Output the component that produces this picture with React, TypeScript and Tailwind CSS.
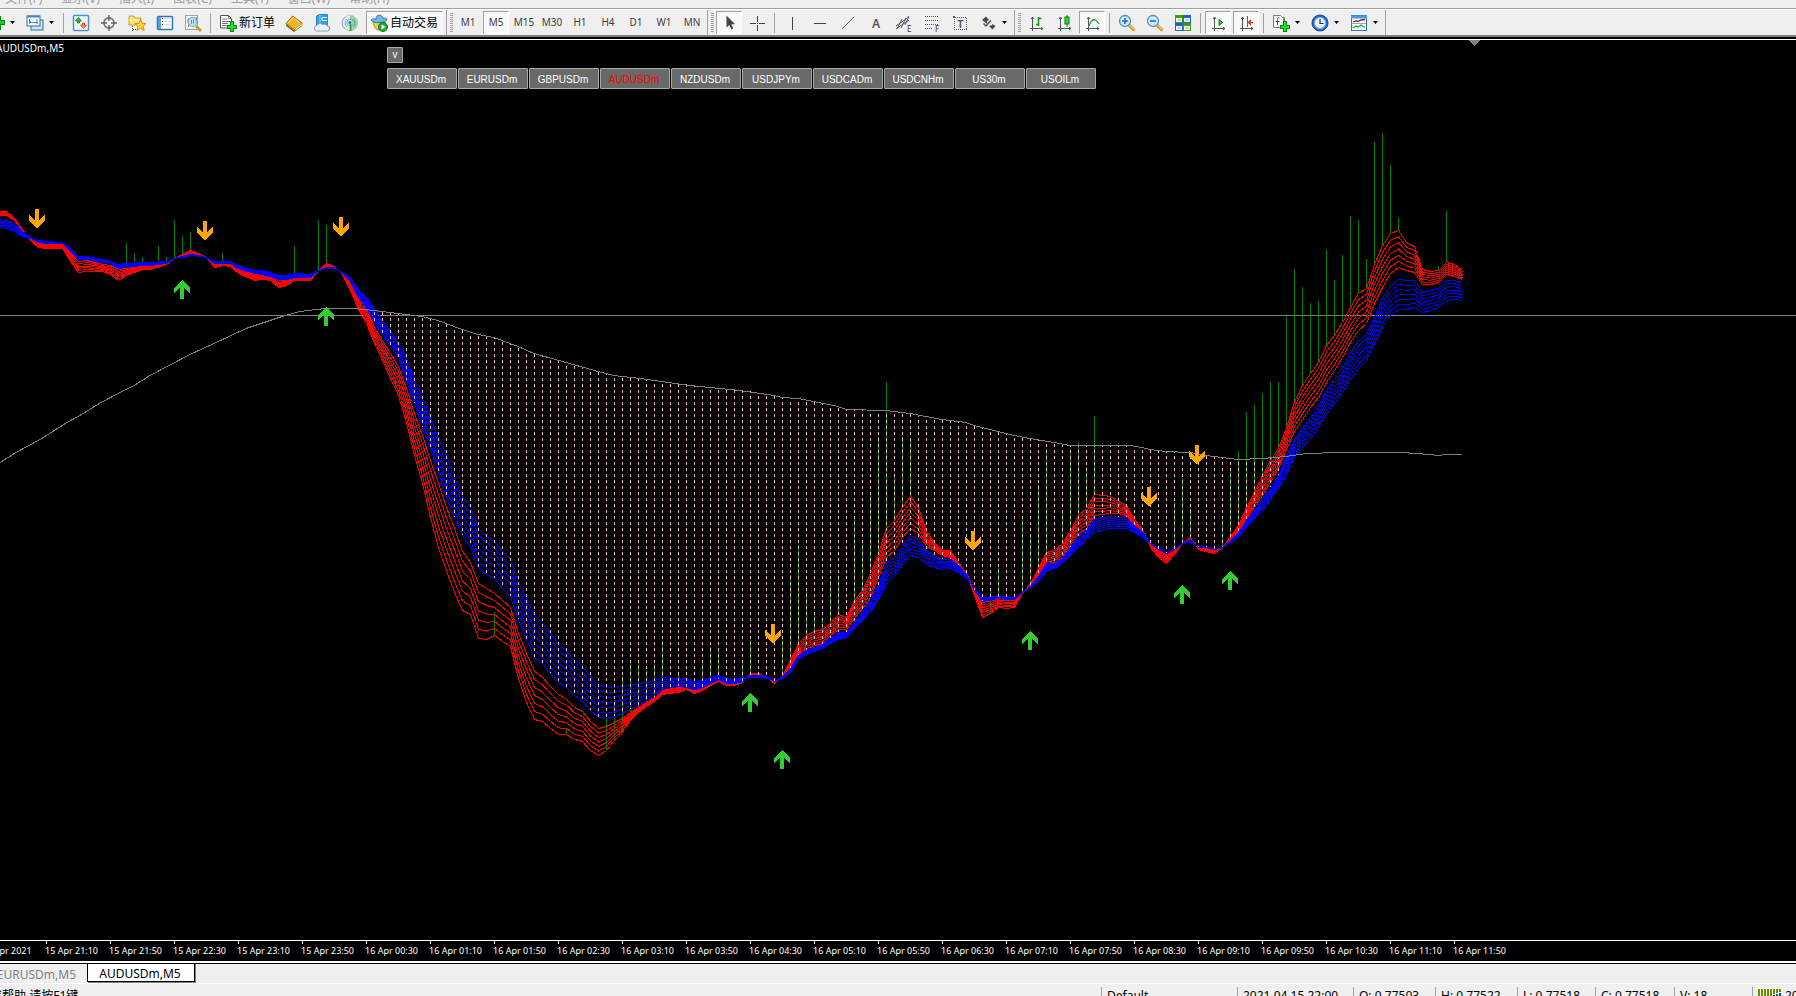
import { useState } from "react";
import type { ReactNode } from "react";

// x, fast line, end of fast group, start of slow group, slow line
const BANDS: number[][] = [
    [-2, 211, 215, 219, 227], [6, 211, 215, 220, 228], [14, 218, 220, 223, 231], [22, 229, 230, 231, 236],
    [30, 240, 238, 237, 238], [38, 247, 243, 242, 240], [46, 248, 244, 243, 241], [62, 248, 244, 243, 242],
    [70, 261, 252, 251, 248], [78, 272, 259, 259, 256], [86, 271, 260, 259, 256], [102, 271, 264, 262, 259],
    [110, 274, 265, 263, 261], [118, 280, 269, 268, 264], [126, 275, 268, 267, 263], [142, 269, 265, 265, 262],
    [150, 269, 265, 265, 262], [166, 264, 263, 263, 261], [174, 258, 258, 258, 258], [182, 254, 256, 256, 257],
    [190, 250, 254, 254, 255], [198, 253, 255, 255, 256], [206, 257, 257, 257, 257], [214, 267, 263, 263, 261],
    [222, 265, 263, 263, 261], [230, 266, 263, 263, 261], [238, 273, 268, 268, 265], [254, 280, 274, 273, 270],
    [262, 279, 274, 274, 270], [270, 280, 276, 276, 272], [278, 287, 279, 279, 275], [286, 285, 279, 279, 275],
    [294, 280, 277, 277, 273], [310, 280, 277, 277, 274], [318, 270, 270, 270, 270], [326, 263, 267, 267, 268],
    [334, 266, 267, 267, 268], [342, 274, 273, 273, 272], [350, 290, 281, 281, 277], [358, 309, 298, 297, 289],
    [366, 323, 308, 307, 297], [374, 343, 327, 322, 308], [382, 360, 340, 335, 320], [390, 378, 353, 346, 331],
    [398, 395, 366, 358, 342], [406, 422, 388, 380, 357], [414, 455, 413, 403, 380], [422, 483, 435, 427, 397],
    [430, 517, 460, 448, 417], [438, 547, 483, 473, 438], [446, 570, 507, 497, 455], [454, 592, 528, 517, 477],
    [462, 610, 551, 535, 497], [470, 614, 562, 546, 507], [478, 638, 583, 568, 528], [486, 639, 588, 574, 536],
    [494, 635, 593, 578, 541], [502, 641, 600, 588, 551], [510, 646, 607, 596, 559], [518, 678, 633, 619, 583],
    [526, 702, 653, 639, 598], [534, 719, 671, 657, 615], [542, 721, 677, 663, 623], [550, 728, 686, 673, 633],
    [558, 734, 694, 682, 644], [566, 734, 699, 687, 651], [574, 739, 707, 695, 660], [582, 741, 711, 701, 666],
    [590, 750, 721, 710, 676], [598, 755, 728, 717, 684], [606, 750, 726, 718, 687], [614, 740, 722, 716, 687],
    [622, 732, 718, 713, 686], [630, 720, 712, 709, 685], [638, 712, 707, 705, 683], [646, 706, 702, 700, 682],
    [654, 701, 697, 697, 680], [662, 694, 689, 689, 677], [678, 692, 687, 686, 678], [686, 689, 687, 687, 678],
    [694, 693, 690, 689, 681], [702, 690, 687, 687, 680], [710, 685, 683, 683, 677], [718, 681, 680, 679, 675],
    [726, 685, 684, 683, 678], [734, 685, 683, 683, 679], [742, 682, 681, 681, 677], [750, 673, 674, 675, 677],
    [758, 673, 674, 675, 677], [766, 677, 677, 676, 678], [774, 683, 681, 681, 680], [782, 675, 676, 676, 678],
    [790, 660, 668, 668, 672], [798, 643, 654, 655, 659], [806, 635, 648, 650, 654], [814, 631, 645, 647, 651],
    [822, 629, 643, 644, 648], [830, 623, 635, 638, 643], [838, 614, 629, 632, 639], [846, 617, 629, 632, 637],
    [854, 600, 618, 622, 628], [862, 590, 608, 612, 620], [870, 573, 597, 599, 612], [878, 553, 577, 585, 599],
    [886, 528, 557, 563, 583], [894, 520, 550, 557, 575], [902, 507, 537, 545, 564], [910, 496, 528, 535, 555],
    [918, 507, 533, 539, 557], [926, 531, 546, 550, 564], [934, 542, 550, 555, 567], [942, 550, 555, 559, 569],
    [950, 550, 557, 559, 568], [958, 562, 564, 565, 572], [966, 573, 573, 574, 578], [974, 595, 588, 590, 588],
    [982, 617, 602, 601, 597], [990, 613, 601, 600, 597], [998, 607, 598, 597, 595], [1006, 608, 599, 599, 597],
    [1014, 607, 599, 599, 597], [1022, 593, 592, 592, 592], [1030, 583, 585, 586, 587], [1038, 568, 575, 576, 581],
    [1046, 552, 563, 563, 571], [1054, 550, 562, 563, 568], [1062, 543, 557, 558, 563], [1070, 530, 545, 547, 555],
    [1078, 515, 533, 536, 547], [1086, 508, 528, 530, 540], [1094, 494, 515, 519, 532], [1102, 495, 514, 517, 529],
    [1110, 496, 513, 516, 528], [1118, 501, 513, 517, 528], [1126, 505, 515, 517, 528], [1134, 519, 524, 525, 532],
    [1142, 529, 531, 532, 537], [1150, 547, 543, 543, 543], [1158, 557, 550, 549, 547], [1166, 563, 554, 553, 552],
    [1174, 554, 549, 549, 548], [1182, 543, 543, 543, 543], [1190, 537, 538, 539, 542], [1198, 549, 547, 547, 546],
    [1206, 551, 548, 547, 546], [1214, 553, 550, 549, 549], [1222, 547, 547, 547, 547], [1230, 536, 539, 540, 542],
    [1238, 525, 532, 532, 537], [1246, 507, 518, 520, 527], [1254, 492, 507, 510, 518], [1262, 475, 495, 498, 510],
    [1270, 460, 482, 487, 500], [1278, 448, 468, 475, 488], [1286, 427, 449, 456, 475], [1294, 402, 431, 439, 456],
    [1302, 385, 419, 428, 447], [1310, 373, 407, 417, 438], [1318, 362, 397, 406, 427], [1326, 345, 382, 390, 414],
    [1334, 335, 370, 379, 403], [1342, 322, 357, 367, 392], [1350, 307, 342, 352, 379], [1358, 293, 330, 341, 368],
    [1366, 288, 323, 333, 360], [1374, 264, 303, 317, 343], [1382, 245, 287, 298, 327], [1390, 233, 273, 286, 315],
    [1398, 230, 267, 279, 309], [1406, 242, 270, 280, 309], [1414, 246, 272, 280, 307], [1422, 269, 284, 292, 312],
    [1430, 271, 284, 290, 310], [1438, 270, 282, 288, 307], [1446, 262, 274, 280, 300], [1454, 264, 276, 280, 299],
    [1462, 270, 279, 283, 300],
];

const AVERAGE: number[][] = [
    [0, 462], [16, 452], [40, 439], [67, 422], [78, 416], [101, 402], [120, 392], [134, 385], [150, 375], [190, 354],
    [214, 343], [246, 328], [270, 320], [285, 315], [300, 311], [325, 308], [354, 308], [374, 310], [398, 313],
    [406, 314], [422, 316], [438, 320], [462, 329], [478, 334], [494, 337], [518, 346], [534, 353], [566, 362],
    [598, 371], [614, 375], [640, 378], [690, 385], [740, 390], [774, 395], [782, 397], [798, 398], [814, 401],
    [838, 406], [846, 409], [886, 410], [910, 413], [942, 419], [966, 422], [974, 425], [1014, 435], [1030, 438],
    [1054, 442], [1070, 445], [1130, 445], [1142, 447], [1150, 449], [1166, 451], [1190, 452], [1206, 455],
    [1222, 457], [1238, 459], [1262, 458], [1286, 456], [1306, 453], [1338, 452], [1402, 452], [1430, 454],
    [1438, 455], [1446, 454], [1462, 454],
];

// x, top of the candle shadow
const SHADOWS: number[][] = [
    [126, 243], [134, 253], [142, 257], [158, 246], [166, 257], [174, 220], [182, 236], [190, 232], [222, 253],
    [294, 246], [318, 220], [326, 225], [494, 612], [566, 729], [606, 718], [614, 700], [622, 676], [630, 661],
    [638, 663], [646, 670], [654, 664], [662, 641], [678, 675], [702, 663], [710, 647], [718, 648], [742, 663],
    [750, 640], [782, 637], [790, 575], [798, 545], [806, 588], [814, 614], [822, 618], [830, 580], [838, 578],
    [854, 518], [862, 542], [870, 492], [878, 437], [886, 382], [894, 477], [902, 436], [910, 438], [990, 590],
    [998, 568], [1022, 518], [1030, 537], [1038, 485], [1046, 450], [1062, 510], [1070, 453], [1078, 442],
    [1086, 467], [1094, 416], [1174, 502], [1182, 478], [1190, 508], [1222, 520], [1230, 468], [1238, 451],
    [1246, 412], [1254, 405], [1262, 393], [1270, 382], [1278, 382], [1286, 317], [1294, 269], [1302, 287],
    [1310, 303], [1318, 301], [1326, 250], [1334, 280], [1342, 255], [1350, 216], [1358, 220], [1366, 259],
    [1374, 142], [1382, 133], [1390, 165], [1398, 218], [1438, 266], [1446, 211],
];

const SELL_ARROWS = [[37, 228], [205, 240], [341, 236], [773, 643], [973, 550], [1149, 506], [1197, 464]];
const BUY_ARROWS = [[182, 280], [326, 307], [750, 693], [782, 750], [1030, 631], [1182, 585], [1230, 571]];

const TIMES = [
    "15 Apr 2021", "15 Apr 21:10", "15 Apr 21:50", "15 Apr 22:30", "15 Apr 23:10", "15 Apr 23:50", "16 Apr 00:30",
    "16 Apr 01:10", "16 Apr 01:50", "16 Apr 02:30", "16 Apr 03:10", "16 Apr 03:50", "16 Apr 04:30", "16 Apr 05:10",
    "16 Apr 05:50", "16 Apr 06:30", "16 Apr 07:10", "16 Apr 07:50", "16 Apr 08:30", "16 Apr 09:10", "16 Apr 09:50",
    "16 Apr 10:30", "16 Apr 11:10", "16 Apr 11:50",
];

const SYMBOLS = ["XAUUSDm", "EURUSDm", "GBPUSDm", "AUDUSDm", "NZDUSDm", "USDJPYm", "USDCADm", "USDCNHm", "US30m", "USOILm"];
const MENUS = ["文件(F)", "显示(V)", "插入(I)", "图表(C)", "工具(T)", "窗口(W)", "帮助(H)"];
const PERIODS = ["M1", "M5", "M15", "M30", "H1", "H4", "D1", "W1", "MN"];

const valueAt = (rows: number[][], x: number, col: number) => {
    const i = rows.findIndex((r) => r[0] >= x);
    if (i <= 0) return rows[0][col];
    const a = rows[i - 1];
    const b = rows[i];
    return a[col] + ((b[col] - a[col]) * (x - a[0])) / (b[0] - a[0]);
};

const bandLine = (from: number, to: number, step: number) =>
    BANDS.map((r) => `${r[0] + 0.5},${(r[from] + ((r[to] - r[from]) * step) / 6 + 0.5).toFixed(1)}`).join(" ");

const STEPS = [0, 1, 2, 3, 4, 5, 6];
const DOTTED = Array.from({ length: 115 }, (_, i) => 374 + i * 8);

const Chart = () => (
    <svg className="block h-full w-full" shapeRendering="crispEdges" fill="none" role="img" aria-label="AUDUSDm M5 chart">
        <g transform="translate(0 -40)">
            <path d="M1469 40h11l-5.500 6z" fill="#808080" />
            <path d="M0 315.500H4000" stroke="#808080" />
            {SHADOWS.map(([x, y]) => (
                <path key={x} d={`M${x + 0.5} ${y}V${Math.round(valueAt(BANDS, x, 1))}`} stroke="#008000" />
            ))}
            {STEPS.map((s) => <polyline key={s} points={bandLine(1, 2, s)} stroke="#ff0000" />)}
            {STEPS.map((s) => <polyline key={s} points={bandLine(3, 4, s)} stroke="#0000ff" />)}
            {DOTTED.map((x) => {
                const top = Math.round(valueAt(AVERAGE, x, 1));
                return (
                    <path
                        key={x}
                        d={`M${x + 0.5} ${top}V${Math.round(valueAt(BANDS, x, 3))}`}
                        stroke="#ffc0cb"
                        strokeDasharray="3 3"
                        strokeDashoffset={top % 6}
                    />
                );
            })}
            <polyline points={AVERAGE.map(([x, y]) => `${x},${y + 0.5}`).join(" ")} stroke="#808080" />
            {SELL_ARROWS.map(([x, y]) => (
                <path key={x} d={`M${x} ${y}l8-7v-6l-6 5v-11h-4v11l-6-5v6z`} fill="#ffa500" />
            ))}
            {BUY_ARROWS.map(([x, y]) => (
                <path key={x} d={`M${x} ${y}l8 8v5l-6-5v11h-4v-11l-6 5v-5z`} fill="#32cd32" />
            ))}
        </g>
    </svg>
);

const Icon = ({ children }: { children: ReactNode }) => (
    <svg className="size-[18px] shrink-0" viewBox="0 0 18 18" fill="none" aria-hidden="true">{children}</svg>
);

const GreenPlus = () => (
    <>
        <path d="M11 7h4v4h3v4h-3v3h-4v-3H8v-4h3z" fill="#0a8a0a" />
        <path d="M12 8h2v4h3v2h-3v3h-2v-3H9v-2h3z" fill="#1fe02f" />
    </>
);

const Axes = () => <path d="M5.500 3v14M3 14.500h13M4 5l1.500-2L7 5M14 13l2 1.500-2 1.500" stroke="#555" />;

const icons = {
    plus: <Icon><path d="M9 2h5v4h4v5h-4v5H9v-5H5V6h4z" fill="#0a8a0a" /><path d="M10 3h3v4h4v3h-4v5h-3v-5H6V7h4z" fill="#10d020" /></Icon>,
    windows: (
        <Icon>
            <rect x="5" y="6" width="12" height="10" fill="#cfe4f7" stroke="#2f6ea5" />
            <rect x="1" y="2" width="13" height="10" fill="#f4f9ff" stroke="#2f6ea5" />
            <path d="M1 2.500h13" stroke="#3c8ad0" strokeWidth="2" />
            <path d="M3.500 5v5M3 8.500h9M5 7L3.500 8.500M11 5v5" stroke="#5d88ad" />
        </Icon>
    ),
    market: (
        <Icon>
            <rect x="1.500" y="1.500" width="15" height="15" rx="1" fill="#f7fbff" stroke="#4a90d2" strokeWidth="1.500" />
            <path d="M9 4h6M11 7h4M3 11h4M3 14h6" stroke="#d5dbe6" strokeDasharray="1 1" />
            <path d="M6.500 3.500l3 3.500h-2v2h-2V7h-2z" fill="#35c235" stroke="#0b7a0b" strokeWidth=".8" />
            <path d="M11.500 14.500l3-3.500h-2V9h-2v2h-2z" fill="#ff8a4a" stroke="#c8380c" strokeWidth=".8" />
        </Icon>
    ),
    target: <Icon><circle cx="9" cy="9" r="5" stroke="#777" strokeWidth="1.800" /><path d="M9 1v6M9 11v6M1 9h6M11 9h6" stroke="#666" strokeWidth="1.500" /></Icon>,
    favorites: (
        <Icon>
            <path d="M1 2h5l1 2h6v7H1z" fill="#f6dd78" stroke="#c8a032" />
            <path d="M1 6h12" stroke="#fff2b8" />
            <path d="M4.500 12v5M5 15.500h3" stroke="#444" strokeDasharray="1 1" />
            <path d="M12.500 5.500l1.700 3.800 4 .3-3 2.700 1 4.200-3.700-2.200L8.800 16.500l1-4.200-3-2.700 4-.3z" fill="#ffd23c" stroke="#b98512" strokeWidth=".8" />
        </Icon>
    ),
    navigator: (
        <Icon>
            <rect x="1.500" y="2.500" width="15" height="13" rx="1" fill="#f7faff" stroke="#2f78bd" strokeWidth="1.500" />
            <path d="M3.500 3v12" stroke="#5b9fdb" strokeWidth="3" />
            <path d="M6.500 4v8" stroke="#222" strokeDasharray="1 2" />
            <path d="M6.500 4v1" stroke="#e00" /><path d="M8 4.500h7M8 7.500h7M8 10.500h7" stroke="#d9dfea" />
        </Icon>
    ),
    tester: (
        <Icon>
            <rect x="1.500" y="1.500" width="12" height="14" fill="#f6f6f0" stroke="#a3a3a3" />
            <path d="M4.500 4v9M3 6h2M12.500 3v5M11 5h2" stroke="#8a8a8a" />
            <circle cx="8.500" cy="8" r="4.500" fill="#b9dcf5" fillOpacity=".85" stroke="#6aa3cf" />
            <path d="M7.500 6v4M9.500 5.500v4" stroke="#6b8fb0" />
            <path d="M12 12l5 5" stroke="#c8992a" strokeWidth="2.800" />
        </Icon>
    ),
    order: (
        <Icon>
            <path d="M1.500 1.500h8l3 3v9.500h-11z" fill="#fff" stroke="#555" />
            <path d="M9.500 1.500v3h3M3 5h5M3 7.500h8M3 9.500h6M3 11.500h5" stroke="#777" /><GreenPlus />
        </Icon>
    ),
    book: (
        <Icon>
            <path d="M1 10l8 6 8-6v2l-8 6-8-6z" fill="#8c6414" />
            <path d="M1 9.500L7.500 2 17 9l-7 7z" fill="#edb62c" stroke="#9c6b12" />
            <path d="M3 9l5-5.500 6 4.500" stroke="#fbe08a" />
            <path d="M10 15l7-6 .5 2-7.500 6z" fill="#fff3c6" stroke="#9c6b12" strokeWidth=".5" />
        </Icon>
    ),
    cloud: (
        <Icon>
            <path d="M3.500 2l3-1.500h8V11h-11z" fill="#2fa0ee" stroke="#1673bd" strokeWidth=".8" />
            <path d="M7 1v9" stroke="#8fd0fa" />
            <path d="M9 3.500h5M9 6.500h5M9 3.500v3" stroke="#e6f5ff" />
            <path d="M3.500 17a2.800 2.800 0 01.5-5.500 3.300 3.300 0 015.500-1 3 3 0 014.500 1.500 2.500 2.500 0 01.5 5z" fill="#edf3fb" stroke="#7f9cc4" />
        </Icon>
    ),
    signal: (
        <Icon>
            <circle cx="9" cy="9" r="7.800" fill="#e1efe4" stroke="#b4ccba" strokeWidth=".8" />
            <path d="M9 1.200a7.800 7.800 0 010 15.600z" fill="#9ccfa6" />
            <path d="M6 13a5 5 0 010-8M4 15a7.500 7.500 0 010-12" stroke="#86b2d2" />
            <path d="M12 13a5 5 0 000-8" stroke="#5aae6c" />
            <circle cx="9" cy="8.500" r="3.200" fill="#cfe4f2" stroke="#79aacb" />
            <circle cx="9" cy="8.500" r="1.600" fill="#2e75b5" /><path d="M9.500 10v7" stroke="#3a9a4e" strokeWidth="1.800" />
        </Icon>
    ),
    auto: (
        <Icon>
            <path d="M3 8c1 5 3 8 6 8s6-3 6-8z" fill="#f2cb4e" stroke="#b38a1e" />
            <path d="M1 6c2-2 4-1 5-1 0-5 6-5 7-1 2 0 4 0 4 2-2 3-14 4-16 0z" fill="#6cb7de" stroke="#347fae" />
            <circle cx="13" cy="13" r="4.500" fill="#20ae2c" stroke="#0c7818" /><path d="M11.500 10.500v5l4-2.500z" fill="#fff" />
        </Icon>
    ),
    cursor: <Icon><path d="M6.500 1.500v12l2.800-2.600 2 4.600 2-1-2-4.300h3.700z" fill="#444" /></Icon>,
    crosshair: <Icon><path d="M9.500 2v6M9.500 11v6M2 9.500h6M11 9.500h6" stroke="#444" shapeRendering="crispEdges" /><path d="M9 9h1v1H9z" fill="#444" /></Icon>,
    vline: <Icon><path d="M9.500 3v13" stroke="#444" shapeRendering="crispEdges" /></Icon>,
    hline: <Icon><path d="M3 9.500h12" stroke="#444" shapeRendering="crispEdges" /></Icon>,
    trend: <Icon><path d="M3 15L15 3" stroke="#555" /></Icon>,
    label: <Icon><text x="9" y="14" textAnchor="middle" fontSize="12" fontWeight="600" fontFamily="Noto Sans" fill="#555">A</text></Icon>,
    channel: (
        <Icon>
            <path d="M1 12L14 3M1 15l13-9M2 15L7 5M6 14l5-10M10 11l4-9" stroke="#555" />
            <text x="12" y="18" fontSize="8" fontFamily="Noto Sans" fill="#333">E</text>
        </Icon>
    ),
    fibo: (
        <Icon>
            <path d="M2 2.500h14M2 6.500h14M2 10.500h14M2 14.500h8" stroke="#555" strokeDasharray="1 1" shapeRendering="crispEdges" />
            <text x="12" y="18" fontSize="8" fontFamily="Noto Sans" fill="#333">F</text>
        </Icon>
    ),
    textbox: (
        <Icon>
            <rect x="3.500" y="3.500" width="12" height="12" stroke="#555" strokeDasharray="1 1" shapeRendering="crispEdges" />
            <path d="M2 2h2v2H2z" fill="#555" />
            <text x="9.500" y="14" textAnchor="middle" fontSize="11" fontWeight="600" fontFamily="Noto Sans" fill="#555">T</text>
        </Icon>
    ),
    shapes: (
        <Icon>
            <path d="M3 6l4-3.500L10 6 7.500 7.500 9 9 7.500 9.500zM10 12l3.500-1-1-1.500 4 2.500-3 3.500z" fill="#4a4a4a" />
            <path d="M4.500 9.500L7 12l5-5.500" stroke="#555" strokeWidth="1.500" />
        </Icon>
    ),
    bars: <Icon><Axes /><path d="M11.500 3v9M11.500 4.500h3M9 10.500h2.500" stroke="#149014" strokeWidth="1.500" /></Icon>,
    candles: <Icon><Axes /><path d="M12 1v12" stroke="#0a7a0a" /><rect x="10" y="3" width="4" height="7" fill="#2ad83a" stroke="#0a7a0a" /></Icon>,
    line: <Icon><Axes /><path d="M6 12c3-8 6-8 10-2" stroke="#2f9a3a" strokeWidth="1.300" /></Icon>,
    zoomIn: (
        <Icon>
            <path d="M11 11l5.500 5.500" stroke="#b28a1a" strokeWidth="3" /><path d="M11.500 11l5 5" stroke="#f5d34a" strokeWidth="1.200" />
            <circle cx="7" cy="7" r="5.500" fill="#cfeafd" stroke="#4a90c8" strokeWidth="1.300" /><path d="M4 7h6M7 4v6" stroke="#2a6fae" strokeWidth="1.600" />
        </Icon>
    ),
    zoomOut: (
        <Icon>
            <path d="M11 11l5.500 5.500" stroke="#b28a1a" strokeWidth="3" /><path d="M11.500 11l5 5" stroke="#f5d34a" strokeWidth="1.200" />
            <circle cx="7" cy="7" r="5.500" fill="#cfeafd" stroke="#4a90c8" strokeWidth="1.300" /><path d="M4 7h6" stroke="#2a6fae" strokeWidth="1.600" />
        </Icon>
    ),
    tiles: (
        <Icon>
            <path d="M1 1h8v8H1zM9 9h8v8H9z" fill="#3f9a14" /><path d="M9 1h8v8H9zM1 9h8v8H1z" fill="#1f5fd0" />
            <path d="M2 4h6v4H2zM10 4h6v4h-6zM2 12h6v4H2zM10 12h6v4h-6z" fill="#f4f8ee" />
            <path d="M3 6h4M11 6h4M3 14h4M11 14h4" stroke="#9fb8a0" />
        </Icon>
    ),
    scroll: <Icon><Axes /><path d="M10 5.500v6l3.500-3z" fill="#35c445" stroke="#0d800d" /></Icon>,
    shift: <Icon><Axes /><path d="M10.500 2v11" stroke="#2f6ea5" /><path d="M16 8.500h-4M14 6l-2.500 2.500L14 11" stroke="#c23b0e" strokeWidth="1.300" /></Icon>,
    indicator: (
        <Icon>
            <path d="M4.500 3.500h8v10h-8z" fill="#fff" stroke="#777" /><path d="M1.500 1.500h7l3 3v9h-10z" fill="#fff" stroke="#777" />
            <path d="M7.500 4c-2-1-2 1-2 3v4M3.500 7.500h4" stroke="#444" /><GreenPlus />
        </Icon>
    ),
    clock: (
        <Icon>
            <circle cx="9" cy="9" r="8" fill="#1f6fc8" stroke="#134b94" /><circle cx="9" cy="9" r="5.500" fill="#eef6ff" stroke="#7db5ea" />
            <path d="M9 5v4.500h3.500" stroke="#333" strokeWidth="1.200" />
        </Icon>
    ),
    template: (
        <Icon>
            <rect x="1.500" y="1.500" width="15" height="15" fill="#fafcff" stroke="#2f78bd" /><path d="M1 3h16" stroke="#4a9be0" strokeWidth="3" />
            <path d="M3 8l3-1 2 .5 3-1.500 4-.5" stroke="#8a2c0c" strokeWidth="1.300" /><path d="M2 9.500h14" stroke="#7db0dc" />
            <path d="M3 14l3-2 2 1 3-2 2 1.500 2 1" stroke="#2d9a35" strokeWidth="1.300" />
        </Icon>
    ),
};

const PRESSED = "border-t-[#a0a0a0] border-l-[#a0a0a0] border-r-white border-b-white bg-[#f8f8f8]";

const ToolButton = ({ name, pressed, children }: { name: string; pressed?: boolean; children: ReactNode }) => (
    <button
        type="button"
        aria-label={name}
        className={`mx-px flex h-[23px] w-[26px] shrink-0 items-center justify-center border text-[10px] text-[#404040] ${pressed ? PRESSED : "border-transparent"}`}
    >
        {children}
    </button>
);

const Caret = ({ name }: { name: string }) => (
    <button type="button" aria-label={name} className="flex h-[23px] w-[11px] shrink-0 items-center">
        <svg className="h-[3px] w-[5px]" viewBox="0 0 5 3" aria-hidden="true"><path d="M0 0h5L2.500 3z" fill="#000" /></svg>
    </button>
);

const Sep = () => <div className="mx-[3px] h-5 w-px shrink-0 bg-[#a0a0a0]" />;

const Grip = () => (
    <div className="mr-px ml-[3px] h-5 w-[3px] shrink-0 bg-[repeating-linear-gradient(#a0a0a0_0_1px,#efefef_1px_2px)]" />
);

const Group = ({ children }: { children: ReactNode }) => (
    <div className="flex h-full shrink-0 items-center border-r border-[#a0a0a0] pr-px">{children}</div>
);

const App = () => {
    const [symbol, setSymbol] = useState("AUDUSDm");

    return (
        <div className="flex h-screen flex-col overflow-hidden bg-[#efefef] font-['Noto_Sans','Noto_Sans_CJK_SC',sans-serif] text-xs text-black">
            <nav className="flex h-[9px] shrink-0 items-end gap-[19px] overflow-hidden border-b border-[#a0a0a0] pb-px pl-[5px] text-[#a0a0a0]">
                {MENUS.map((m) => (
                    <button key={m} type="button" className="shrink-0 leading-4">{m}</button>
                ))}
            </nav>

            <div className="flex h-[28px] shrink-0 items-center overflow-hidden border-t border-b-2 border-t-white border-b-[#808080]">
                <Group>
                    <div className="-ml-[18px] flex items-center">
                        <ToolButton name="New chart">{icons.plus}</ToolButton>
                        <Caret name="New chart list" />
                    </div>
                    <ToolButton name="Profiles">{icons.windows}</ToolButton>
                    <Caret name="Profile list" />
                    <Sep />
                    <ToolButton name="Market watch">{icons.market}</ToolButton>
                    <ToolButton name="Data window">{icons.target}</ToolButton>
                    <ToolButton name="Navigator">{icons.favorites}</ToolButton>
                    <ToolButton name="Terminal">{icons.navigator}</ToolButton>
                    <ToolButton name="Strategy tester">{icons.tester}</ToolButton>
                    <Sep />
                    <button type="button" className="flex h-[23px] shrink-0 items-center gap-0.5 px-[5px]">
                        {icons.order}
                        新订单
                    </button>
                    <ToolButton name="MetaEditor">{icons.book}</ToolButton>
                    <ToolButton name="Cloud">{icons.cloud}</ToolButton>
                    <ToolButton name="Signals">{icons.signal}</ToolButton>
                    <button type="button" className={`mx-0.5 flex h-[23px] shrink-0 items-center gap-0.5 border px-[3px] pr-1 ${PRESSED}`}>
                        {icons.auto}
                        自动交易
                    </button>
                </Group>
                <Group>
                    <Grip />
                    {PERIODS.map((p) => (
                        <ToolButton key={p} name={p} pressed={p === "M5"}>{p}</ToolButton>
                    ))}
                </Group>
                <Group>
                    <Grip />
                    <ToolButton name="Cursor" pressed>{icons.cursor}</ToolButton>
                    <ToolButton name="Crosshair">{icons.crosshair}</ToolButton>
                    <Sep />
                    <ToolButton name="Vertical line">{icons.vline}</ToolButton>
                    <ToolButton name="Horizontal line">{icons.hline}</ToolButton>
                    <ToolButton name="Trendline">{icons.trend}</ToolButton>
                    <ToolButton name="Text">{icons.label}</ToolButton>
                    <ToolButton name="Equidistant channel">{icons.channel}</ToolButton>
                    <ToolButton name="Fibonacci">{icons.fibo}</ToolButton>
                    <ToolButton name="Text label">{icons.textbox}</ToolButton>
                    <ToolButton name="Arrows">{icons.shapes}</ToolButton>
                    <Caret name="Arrow list" />
                </Group>
                <Group>
                    <Grip />
                    <ToolButton name="Bar chart">{icons.bars}</ToolButton>
                    <ToolButton name="Candlesticks">{icons.candles}</ToolButton>
                    <ToolButton name="Line chart" pressed>{icons.line}</ToolButton>
                    <Sep />
                    <ToolButton name="Zoom in">{icons.zoomIn}</ToolButton>
                    <ToolButton name="Zoom out">{icons.zoomOut}</ToolButton>
                    <ToolButton name="Tile windows">{icons.tiles}</ToolButton>
                    <Sep />
                    <ToolButton name="Auto scroll" pressed>{icons.scroll}</ToolButton>
                    <ToolButton name="Chart shift" pressed>{icons.shift}</ToolButton>
                    <Sep />
                    <ToolButton name="Indicators">{icons.indicator}</ToolButton>
                    <Caret name="Indicator list" />
                    <ToolButton name="Periods">{icons.clock}</ToolButton>
                    <Caret name="Period list" />
                    <ToolButton name="Templates">{icons.template}</ToolButton>
                    <Caret name="Template list" />
                </Group>
            </div>

            <main className="flex min-h-0 flex-1 flex-col bg-black pt-0.5 text-white">
                <div className="relative min-h-0 flex-1 overflow-hidden border-y border-white">
                    <Chart />
                    <div className="absolute top-0 -left-1 text-[10px] leading-4">AUDUSDm,M5</div>
                    <div className="absolute top-[7px] left-[387px] flex flex-col gap-[5px] font-['Liberation_Sans',sans-serif] text-[10px]">
                        <button type="button" className="size-4 rounded-[1px] border border-[#a9a9a9] bg-[#696969] leading-[14px]">v</button>
                        <div className="flex gap-px">
                            {SYMBOLS.map((s) => (
                                <button
                                    key={s}
                                    type="button"
                                    onClick={() => setSymbol(s)}
                                    className={`h-[21px] w-[70px] shrink-0 rounded-[1px] border border-[#a9a9a9] bg-[#696969] pt-0.5 pr-0.5 ${s === symbol ? "text-[#ff0000]" : "text-white"}`}
                                >
                                    {s}
                                </button>
                            ))}
                        </div>
                    </div>
                </div>
                <div className="-ml-[18px] flex h-5 shrink-0 overflow-hidden text-[9px] leading-[18px]">
                    {TIMES.map((t) => (
                        <div key={t} className="w-16 shrink-0 whitespace-nowrap">
                            <div className="h-[3px] w-px bg-white" />
                            <div className="-mt-0.5 -ml-px">{t}</div>
                        </div>
                    ))}
                </div>
            </main>

            <div className="flex h-[23px] shrink-0 border-t-2 border-b border-white">
                <div className="flex flex-1 items-start overflow-hidden border-t border-black">
                    <button type="button" className="-ml-2 h-[18px] w-[95px] shrink-0 pr-[11px] text-right leading-[22px] text-[#808080]">EURUSDm,M5</button>
                    <button type="button" className="-mt-px h-[19px] w-[108px] shrink-0 border-x border-b border-black bg-white pr-0.5 leading-[22px] shadow-[1px_1px_0_#808080]">AUDUSDm,M5</button>
                </div>
            </div>

            <footer className="flex h-3 shrink-0 overflow-hidden whitespace-nowrap leading-6">
                <div className="-ml-[22px] flex-1">请求帮助,请按F1键</div>
                <div className="mt-[3px] w-[136px] border-l border-[#a0a0a0] pl-[5px] leading-[18px]">Default</div>
                <div className="mt-[3px] w-[116px] border-l border-[#a0a0a0] pl-[5px] leading-[18px]">2021.04.15 22:00</div>
                <div className="mt-[3px] w-[82px] border-l border-[#a0a0a0] pl-[5px] leading-[18px]">O: 0.77503</div>
                <div className="mt-[3px] w-[82px] border-l border-[#a0a0a0] pl-[5px] leading-[18px]">H: 0.77522</div>
                <div className="mt-[3px] w-[78px] border-l border-[#a0a0a0] pl-[5px] leading-[18px]">L: 0.77518</div>
                <div className="mt-[3px] w-[79px] border-l border-[#a0a0a0] pl-[5px] leading-[18px]">C: 0.77518</div>
                <div className="mt-[3px] w-[78px] border-l border-[#a0a0a0] pl-[5px] leading-[18px]">V: 18</div>
                <div className="mt-[3px] flex w-[44px] gap-1 overflow-hidden border-l border-[#a0a0a0] pl-[5px] leading-[18px]">
                    <svg className="mt-0.5 h-4 w-[23px] shrink-0" viewBox="0 0 23 16" shapeRendering="crispEdges" aria-hidden="true">
                        <path d="M1 0v16M4 0v16M7 0v16M10 0v16M13 0v16M16 0v5M19 0v4M22 0v3" stroke="#6b8e00" strokeWidth="2" />
                        <path d="M16 6v10M19 5v11M22 4v12" stroke="#1d4f6e" strokeWidth="2" />
                    </svg>
                    20
                </div>
            </footer>
        </div>
    );
};

export default App;
